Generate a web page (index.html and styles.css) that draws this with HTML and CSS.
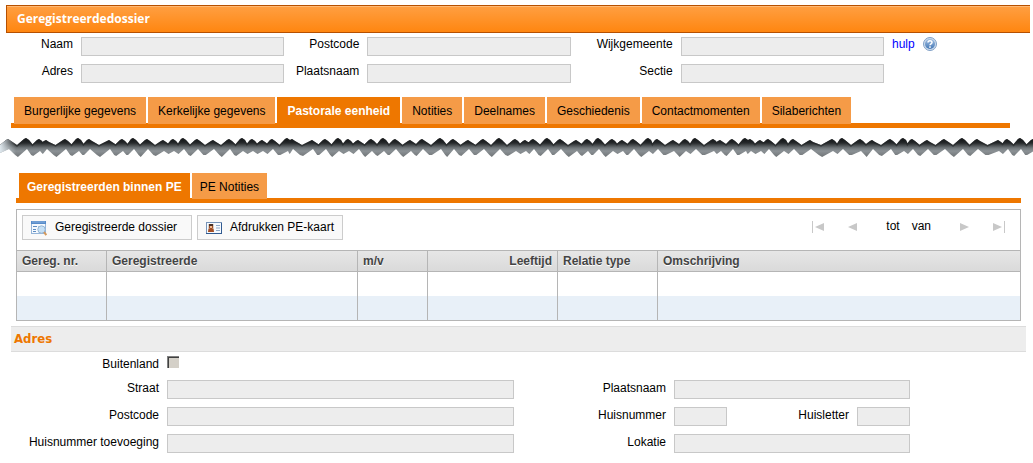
FILE: index.html
```html
<!DOCTYPE html>
<html lang="nl">
<head>
<meta charset="utf-8">
<title>Geregistreerdedossier</title>
<link rel="stylesheet" href="styles.css">
</head>
<body>
<header class="titlebar"><h1 class="titlebar-text">Geregistreerdedossier</h1></header>

<form class="summary">
  <label class="label" for="naam">Naam</label><input class="field" id="naam" readonly>
  <label class="label" for="postcode">Postcode</label><input class="field" id="postcode" readonly>
  <label class="label" for="wijk">Wijkgemeente</label><input class="field" id="wijk" readonly>
  <a class="help" href="#hulp">hulp
    <svg width="14" height="14" viewBox="0 0 14 14" aria-hidden="true">
      <defs><linearGradient id="helpFill" x1="0" y1="0" x2="0" y2="1"><stop offset="0" stop-color="#a3c0e2"/><stop offset="1" stop-color="#4377b5"/></linearGradient></defs>
      <circle cx="7" cy="7" r="6.5" fill="#cfdded" stroke="#7f9fc6"/>
      <circle cx="7" cy="7" r="5" fill="url(#helpFill)"/>
      <path d="M5 5.6C5 3.2 9 3.2 9 5.5C9 6.8 7 6.8 7 8.3" fill="none" stroke="#fff" stroke-width="1.5"/>
      <rect x="6.2" y="9.3" width="1.6" height="1.5" fill="#fff"/>
    </svg>
  </a>
  <label class="label" for="adres">Adres</label><input class="field" id="adres" readonly>
  <label class="label" for="plaats">Plaatsnaam</label><input class="field" id="plaats" readonly>
  <label class="label" for="sectie">Sectie</label><input class="field" id="sectie" readonly>
</form>

<nav class="tabs tabs-main">
  <a class="tab" href="#burgerlijk">Burgerlijke gegevens</a>
  <a class="tab" href="#kerkelijk">Kerkelijke gegevens</a>
  <a class="tab tab-active" href="#pastoraal" aria-current="page">Pastorale eenheid</a>
  <a class="tab" href="#notities">Notities</a>
  <a class="tab" href="#deelnames">Deelnames</a>
  <a class="tab" href="#geschiedenis">Geschiedenis</a>
  <a class="tab" href="#contact">Contactmomenten</a>
  <a class="tab" href="#sila">Silaberichten</a>
</nav>

<svg class="tear" viewBox="0 0 1033 20" preserveAspectRatio="none" aria-hidden="true">
  <defs>
    <linearGradient id="tearFill" x1="0" y1="0" x2="0" y2="20" gradientUnits="userSpaceOnUse">
      <stop offset="0" stop-color="#0c0e0f"/><stop offset=".25" stop-color="#26292b"/><stop offset=".5" stop-color="#71777a"/><stop offset=".65" stop-color="#8b9195"/><stop offset="1" stop-color="#6c7072"/>
    </linearGradient>
    <linearGradient id="tearLeft" x1="0" y1="0" x2="16" y2="0" gradientUnits="userSpaceOnUse"><stop offset="0" stop-color="#dfe8ee"/><stop offset="1" stop-color="#dfe8ee" stop-opacity="0"/></linearGradient>
    <clipPath id="tearClip"><path id="tearShape" d=""/></clipPath>
  </defs>
  <g clip-path="url(#tearClip)">
    <rect width="1033" height="20" fill="url(#tearFill)"/>
    <path id="tearEdge" d="" fill="none" stroke="#222527" stroke-opacity=".6" stroke-width="3"/>
    <rect width="16" height="20" fill="url(#tearLeft)"/>
  </g>
</svg>

<main>
  <nav class="tabs tabs-sub">
    <a class="tab tab-active" href="#binnen-pe" aria-current="page">Geregistreerden binnen PE</a>
    <a class="tab" href="#pe-notities">PE Notities</a>
  </nav>

  <section class="panel">
    <div class="toolbar">
      <button class="tool tool-wide" type="button">
        <svg width="16" height="16" viewBox="0 0 16 16" aria-hidden="true">
          <rect x=".5" y="1.5" width="14" height="12" fill="#f5f9fd" stroke="#94b4d8"/>
          <path d="M0 1H15V4H0Z" fill="#568bc9"/><path d="M1 2H14" stroke="#89b0df"/>
          <path d="M2 6.5H6M2 9.5H5M2 11.5H5" stroke="#5e8cc2"/><path d="M7 6.5H13" stroke="#b2c8df"/>
          <circle cx="10.5" cy="9.5" r="3.7" fill="#c6e0f5" stroke="#96b7d5"/>
          <path d="M13 12.2L15.3 15" stroke="#d59a5c" stroke-width="2"/>
        </svg>
        Geregistreerde dossier
      </button>
      <button class="tool" type="button">
        <svg width="16" height="16" viewBox="0 0 16 16" aria-hidden="true">
          <rect x=".5" y="2.5" width="15" height="11" fill="#f6faff" stroke="#7794b8"/>
          <path d="M0 13.5H16M15.5 3V14" stroke="#315b91"/>
          <rect x="2" y="4" width="6" height="8" fill="#d9d2cb"/>
          <path d="M3 4H7V8H6L7.5 9L8 12H2L2.5 9L4 8H3Z" fill="#a34e24"/>
          <path d="M3 4H7V6H3Z" fill="#493026"/><rect x="4" y="6" width="2" height="2" fill="#f1bb91"/>
          <path d="M10 5.5H14M10 8H14M10 10.5H14" stroke="#8fa9c7"/>
        </svg>
        Afdrukken PE-kaart
      </button>
      <div class="pager">
        <button class="page-end" type="button" disabled aria-label="Eerste"><svg width="14" height="12" viewBox="0 0 14 12"><path d="M1.5 0V12" stroke="#c8c8c8"/><path d="M13 2V10L4 6Z" fill="#c8c8c8"/></svg></button>
        <button class="page-step" type="button" disabled aria-label="Vorige"><svg width="9" height="12" viewBox="0 0 9 12"><path d="M9 2V10L0 6Z" fill="#c8c8c8"/></svg></button>
        <span class="page-range"><span>tot</span><span>van</span></span>
        <button class="page-step" type="button" disabled aria-label="Volgende"><svg width="9" height="12" viewBox="0 0 9 12"><path d="M0 2V10L9 6Z" fill="#c8c8c8"/></svg></button>
        <button class="page-end" type="button" disabled aria-label="Laatste"><svg width="14" height="12" viewBox="0 0 14 12"><path d="M12.500 0V12" stroke="#c8c8c8"/><path d="M1 2V10L10 6Z" fill="#c8c8c8"/></svg></button>
      </div>
    </div>
    <table class="grid">
      <colgroup><col class="col-nr"><col class="col-name"><col class="col-sex"><col class="col-age"><col class="col-rel"><col></colgroup>
      <thead><tr><th>Gereg. nr.</th><th>Geregistreerde</th><th>m/v</th><th class="right">Leeftijd</th><th>Relatie type</th><th>Omschrijving</th></tr></thead>
      <tbody>
        <tr><td></td><td></td><td></td><td></td><td></td><td></td></tr>
        <tr><td></td><td></td><td></td><td></td><td></td><td></td></tr>
      </tbody>
    </table>
  </section>

  <h2 class="section-title">Adres</h2>
  <form class="address">
    <label class="label" for="buitenland">Buitenland</label><input class="check" type="checkbox" id="buitenland">
    <label class="label start" for="straat">Straat</label><input class="field" id="straat" readonly>
    <label class="label" for="plaats2">Plaatsnaam</label><input class="field wide" id="plaats2" readonly>
    <label class="label" for="postcode2">Postcode</label><input class="field" id="postcode2" readonly>
    <label class="label" for="huisnummer">Huisnummer</label><input class="field" id="huisnummer" readonly>
    <label class="label" for="huisletter">Huisletter</label><input class="field" id="huisletter" readonly>
    <label class="label" for="toevoeging">Huisnummer toevoeging</label><input class="field" id="toevoeging" readonly>
    <label class="label" for="lokatie">Lokatie</label><input class="field wide" id="lokatie" readonly>
  </form>
</main>
<script src="tear.js"></script>
</body>
</html>
```
FILE: styles.css
```css
* { box-sizing: border-box; }
body { margin: 0; background: #fff; color: #000; font: 12px/15px "Liberation Sans", Arial, sans-serif; }

.titlebar {
  display: flex;
  align-items: center;
  height: 28px;
  margin: 5px 3px 0 6px;
  padding-left: 10px;
  border: 1px solid #b65000;
  border-right: 0;
  background: linear-gradient(#ff9f42, #ff8610);
  box-shadow: inset 0 1px #ffb873;
}
.titlebar-text { margin: 0; color: #fff; font: bold 12px/16px "Open Sans", sans-serif; }

.label { text-align: right; white-space: nowrap; }
.field {
  width: 100%;
  min-width: 0;
  height: 19px;
  padding: 0 4px;
  border: 1px solid #c8c8c8;
  border-radius: 0;
  background: #ededed;
  font: inherit;
}
.summary {
  display: grid;
  grid-template-columns: 73px 1fr 67px 1fr 94px 1fr 141px;
  gap: 8px;
  margin-top: 4px;
}
.help { display: flex; gap: 8px; height: 15px; color: #00f; text-decoration: none; }

.tabs { display: flex; gap: 2px; border-bottom: 5px solid #ee7700; padding-left: 3px; }
.tabs-main { height: 31px; margin: 14px 23px 0 11px; }
.tabs-sub { height: 30px; margin: 15px 12px 0 16px; }
.tab { margin-bottom: -1px; padding: 7px 10px 0; background: #f59b47; color: #000; text-decoration: none; white-space: nowrap; }
.tab-active { background: #ee7700; color: #fff; font-weight: bold; }
.tabs-sub .tab { padding: 7px 8px 0; }

.tear { display: block; width: 100%; height: 20px; margin-top: 10px; }

.panel { margin: 6px 12px 0 16px; border: 1px solid #b5b5b5; }
.toolbar { display: flex; gap: 5px; padding: 5px 14px 10px 5px; }
.tool {
  display: flex;
  align-items: center;
  gap: 8px;
  height: 25px;
  padding: 0 8px;
  border: 1px solid #ccc;
  background: #f9f9f9;
  color: #000;
  font: inherit;
  white-space: nowrap;
}
.tool-wide { min-width: 170px; }
.pager { display: flex; align-items: center; gap: 12px; height: 23px; margin-left: auto; }
.page-end, .page-step { display: flex; justify-content: center; padding: 0; border: 0; background: none; }
.page-step { width: 31px; }
.page-range { display: flex; gap: 12px; padding: 0 6px; }

.grid { width: 100%; table-layout: fixed; border-collapse: separate; border-spacing: 0; }
.col-nr { width: 90px; }
.col-name { width: 251px; }
.col-sex { width: 70px; }
.col-age { width: 130px; }
.col-rel { width: 100px; }
.grid th {
  height: 22px;
  padding: 0 5px;
  border: solid #b5b5b5;
  border-width: 1px 1px 1px 0;
  background: linear-gradient(#e6e6e6, #dadada);
  color: #444;
  text-align: left;
  text-shadow: 0 1px #fff;
}
.grid .right { text-align: right; }
.grid td { height: 24px; padding: 0; border-right: 1px solid #b5b5b5; }
.grid th:last-child, .grid td:last-child { border-right: 0; }
.grid tbody tr:nth-child(even) { background: #e8f0f8; }

.section-title {
  margin: 5px 7px 0 11px;
  padding: 4px 3px;
  border: solid #dcdcdc;
  border-width: 1px 0;
  background: #ededed;
  color: #ee7700;
  font: bold 13px/16px "DejaVu Sans Condensed", "Open Sans", sans-serif;
}
.address {
  display: grid;
  grid-template-columns: 159px 347fr 144px 53fr 114px 53fr;
  grid-template-rows: 16px;
  gap: 8px;
  margin: 4px 123px 10px 0;
}
.address .label { line-height: 16px; }
.start { grid-column-start: 1; }
.wide { grid-column: span 3; }
.check {
  appearance: none;
  width: 12px;
  height: 12px;
  margin: 0;
  border: solid #808080;
  border-width: 1px 0 0 1px;
  background: #d4d0c8;
  box-shadow: inset 1px 1px #404040;
}
```
FILE: tear.js
```js
// Each entry is [x, y] of a peak on the upper edge, at the tear's own scale.
const peaks = [8, 26, 39, 46, 65, 78, 89, 109, 122, 133, 147, 163, 173, 183, 197, 213, 229, 242, 252, 262, 272, 287, 292, 312, 325, 338, 348, 358, 371, 383, 395, 410, 422, 440, 453, 468, 483, 499, 515, 525, 533, 547, 560, 576, 587, 598, 612, 622, 633, 648, 657, 673, 685, 695, 713, 720, 732, 745, 750, 760, 768, 783, 793, 810, 832, 842, 860, 872, 890, 903, 912, 927, 944, 962, 977, 998, 1007, 1020, 1033]
  .map((x, i) => [x, [1, 0, 1, 2][i % 4]]);
const upper = [[0, 7]];
const lower = [[0, 15]];
peaks.forEach(([x, y], i) => {
  const gap = (peaks[i + 1] || [1040])[0] - x;
  upper.push([x - 2, y + 1], [x, y], [x + 3, y + 2]);
  upper.push([x + gap * 0.5, gap < 9 ? 4 : Math.min(7, 3 + gap / 4)]);
  lower.push([x + 1, gap > 12 ? 11 : 13]);
  lower.push([x + gap * 0.4, gap > 10 ? 17 : 15], [x + gap * 0.55, gap > 10 ? 19 - (i % 3) : 16]);
});
const line = points => points.map(p => p.join(" ")).join("L");
document.getElementById("tearShape").setAttribute("d", "M" + line(upper) + "L" + line(lower.reverse()) + "Z");
document.getElementById("tearEdge").setAttribute("d", "M" + line(upper));
```
